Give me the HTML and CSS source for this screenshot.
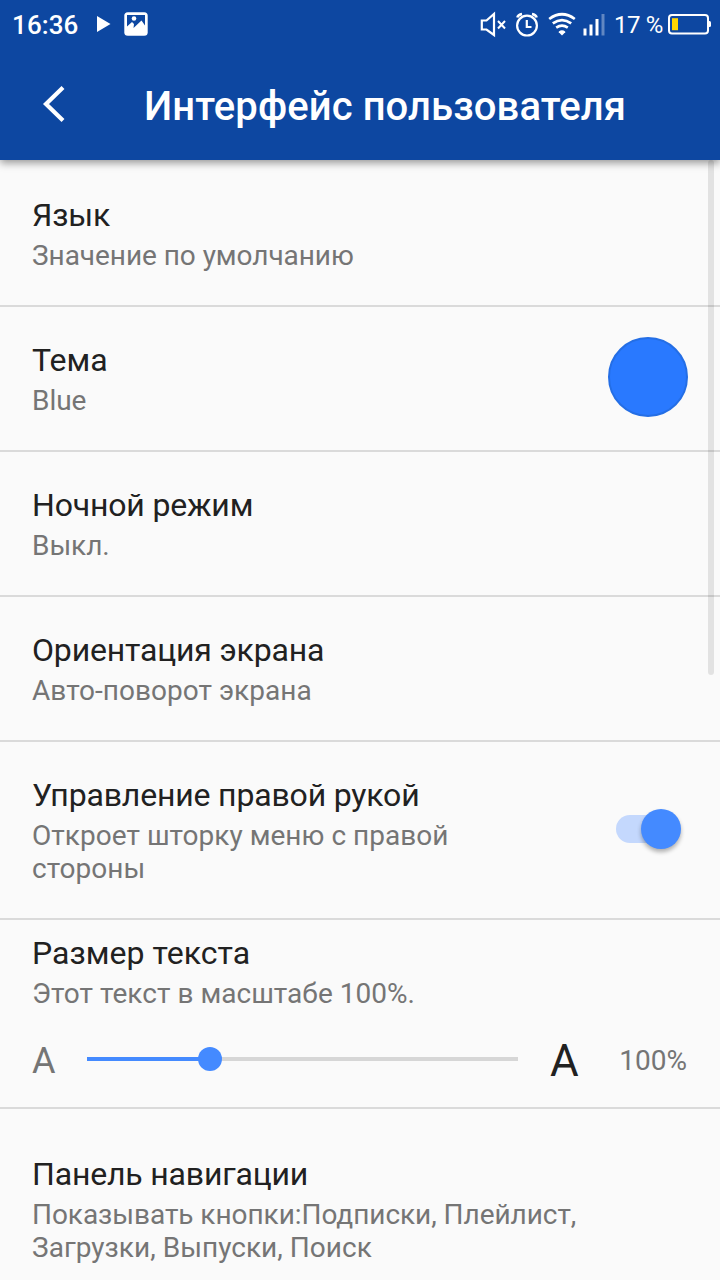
FILE: index.html
```html
<!DOCTYPE html>
<html lang="ru">
<head>
<meta charset="utf-8">
<title>Интерфейс пользователя</title>
<link rel="stylesheet" href="styles.css">
</head>
<body>
<div class="screen">
  <header class="top">
    <div class="status">
      <span class="clock">16:36</span>
      <svg class="play" width="14" height="18" viewBox="0 0 14 18"><path d="M0 1l13.500 8L0 17z" fill="#fff"/></svg>
      <svg class="picture" width="24" height="24" viewBox="0 0 24 24"><rect x=".3" y=".3" width="23.400" height="23.400" rx="3.500" fill="#fff"/><path d="M3 3H21V13.500L17.500 8.500L9.500 16L10 12L8 10L3 14.500Z" fill="#0d47a1"/><circle cx="10" cy="6.500" r="2.300" fill="#fff"/></svg>
      <div class="indicators">
        <svg class="signals" width="126" height="28" viewBox="0 0 126 28" fill="none" stroke="#fff">
          <path d="M1.800 9.500H6.500L14 3V24L6.500 18.500H1.800Z" stroke-width="2.200" stroke-linejoin="miter"/>
          <path d="M18 10l7 7.500M25 10l-7 7.500" stroke-width="2"/>
          <circle cx="47" cy="14.600" r="9.900" stroke-width="2.200"/>
          <path d="M46.800 9v7h4.700" stroke-width="2.200"/>
          <path d="M37.300 6.500q.8-3 4.700-3.600M56.700 6.500q-.8-3-4.700-3.600" stroke-width="2.500"/>
          <path d="M69.200 8Q82 -1.500 94.800 8M72.800 12.400Q82 5.800 91.200 12.400M76.200 16.600Q82 12.800 87.800 16.600" stroke-width="2.700"/>
          <path d="M78.800 20.400Q82 18 85.200 20.400V21.300L82 24.500L78.800 21.300Z" fill="#fff" stroke="none"/>
          <path d="M105 17.500V24.500M111 13.500V24.500M117 8V24.500" stroke-width="3"/>
          <path d="M123 3V24.500" stroke-width="3" opacity=".35"/>
        </svg>
        <span class="percent">17 %</span>
        <svg class="battery" width="44" height="22" viewBox="0 0 44 22"><rect x="1" y="1" width="39" height="18.500" rx="3" fill="none" stroke="#fff" stroke-width="2"/><path d="M4 4.200h6v12H4z" fill="#ffd600"/><path d="M40 7h1.500q1.500 0 1.500 1.500v3q0 1.500-1.500 1.500H40z" fill="#fff"/></svg>
      </div>
    </div>
    <div class="toolbar">
      <svg class="back" width="24" height="38" viewBox="0 0 24 38"><path d="M21 2.500L4 19L21 35.500" fill="none" stroke="#fff" stroke-width="4.200"/></svg>
      <h1 class="heading">Интерфейс пользователя</h1>
    </div>
  </header>
  <main class="settings">
    <section class="row">
      <div class="label"><h2 class="title">Язык</h2><p class="sub">Значение по умолчанию</p></div>
    </section>
    <section class="row">
      <div class="label"><h2 class="title loose">Тема</h2><p class="sub">Blue</p></div>
      <div class="swatch"></div>
    </section>
    <section class="row">
      <div class="label"><h2 class="title">Ночной режим</h2><p class="sub">Выкл.</p></div>
    </section>
    <section class="row">
      <div class="label"><h2 class="title">Ориентация экрана</h2><p class="sub loose">Авто-поворот экрана</p></div>
    </section>
    <section class="row">
      <div class="label"><h2 class="title">Управление правой рукой</h2><p class="sub loose">Откроет шторку меню с правой<br>стороны</p></div>
      <div class="switch"><div class="knob"></div></div>
    </section>
    <section class="row text-size">
      <div class="label"><h2 class="title loose">Размер текста</h2><p class="sub loose">Этот текст в масштабе 100%.</p></div>
      <div class="scale">
        <span class="small-a">A</span>
        <div class="track"><div class="fill"></div><div class="thumb"></div></div>
        <span class="large-a">A</span>
        <span class="value">100%</span>
      </div>
    </section>
    <section class="row navigation">
      <div class="label"><h2 class="title">Панель навигации</h2><p class="sub">Показывать кнопки:Подписки, Плейлист,<br><span class="loose">Загрузки, Выпуски, Поиск</span></p></div>
    </section>
    <div class="scrollbar"></div>
  </main>
</div>
</body>
</html>
```
FILE: styles.css
```css
* { box-sizing: border-box; }
body { margin: 0; font-family: Roboto, "Noto Sans", sans-serif; background: #fafafa; }
svg { display: block; flex: none; }
h1, h2, p { margin: 0; font-weight: 400; }

.screen { width: 720px; height: 1280px; overflow: hidden; background: #fafafa; }
.top { position: relative; z-index: 1; height: 160px; background: #0d47a1; color: #fff; box-shadow: 0 3px 8px rgba(0, 0, 0, .4); }

.status { display: flex; align-items: center; height: 48px; padding: 0 8px 0 12px; }
.clock { width: 85px; font-size: 26px; font-weight: 500; line-height: 30px; padding-top: 2px; letter-spacing: .1px; }
.picture { margin-left: 13px; }
.indicators { display: flex; align-items: center; margin-left: auto; }
.signals { margin-top: 1px; }
.battery { margin-top: 2px; }
.percent { width: 62px; font-size: 24px; line-height: 28px; white-space: nowrap; padding: 1px 0 0 8px; letter-spacing: -.4px; }

.toolbar { display: flex; align-items: center; height: 112px; padding-left: 42px; }
.back { margin-top: -1px; }
.heading { margin-left: 78px; padding-top: 6px; font-size: 40px; font-weight: 500; line-height: 48px; white-space: nowrap; letter-spacing: .1px; }

.settings { position: relative; padding-top: 2px; }
.row { display: flex; justify-content: space-between; align-items: center; padding: 34px 32px 33px; border-bottom: 2px solid #dadada; }
.title { font-size: 32px; line-height: 38px; color: #212121; white-space: nowrap; letter-spacing: -.17px; }
.sub { margin-top: 5px; font-size: 28px; line-height: 33px; color: #757575; white-space: nowrap; letter-spacing: -.05px; }
.loose { letter-spacing: .03px; }
.swatch { width: 80px; height: 80px; margin: -4px 0 0; border: 2px solid #246ee5; border-radius: 50%; background: #2979ff; }

.switch { display: flex; justify-content: flex-end; align-items: center; width: 64px; height: 28px; margin: -4px 8px 0 0; border-radius: 14px; background: #c4d8fd; }
.knob { flex: none; width: 40px; height: 40px; margin-right: -1px; border-radius: 50%; background: #448aff; box-shadow: 0 3px 4px rgba(0, 0, 0, .3); }

.text-size { display: block; height: 189px; padding: 14px 32px 0; }
.scale { display: flex; align-items: center; height: 60px; margin-top: 19px; }
.small-a { width: 55px; font-size: 36px; line-height: 42px; color: #757575; padding-top: 4px; }
.track { display: flex; align-items: center; width: 431px; height: 4px; background: #d6d6d6; }
.fill { width: 112px; height: 4px; background: #448aff; }
.thumb { flex: none; width: 24px; height: 24px; margin-left: -1px; border-radius: 50%; background: #448aff; }
.large-a { margin-left: 32px; font-size: 44px; line-height: 52px; color: #212121; padding-top: 4px; }
.value { margin: 0 1px 0 auto; font-size: 28px; line-height: 33px; color: #757575; padding-top: 3px; }
.navigation { padding-top: 46px; }

.scrollbar { position: absolute; top: 0; right: 6px; width: 6px; height: 515px; border-radius: 3px; background: rgba(0, 0, 0, .095); }
```
